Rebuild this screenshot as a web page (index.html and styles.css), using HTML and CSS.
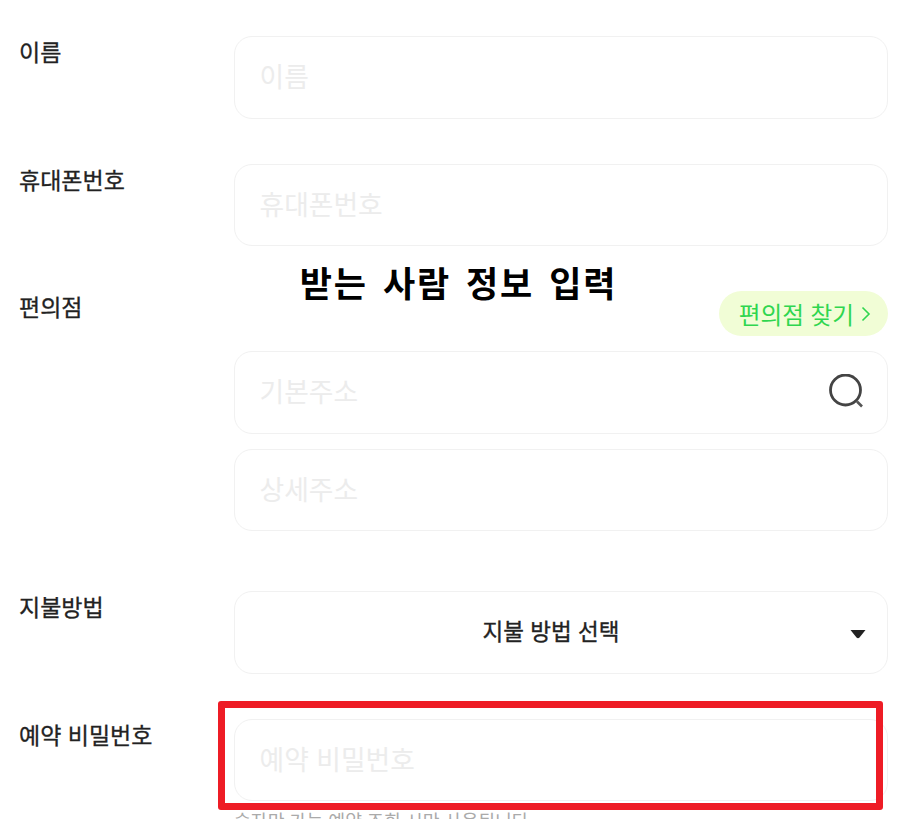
FILE: index.html
```html
<!DOCTYPE html>
<html lang="ko">
<head>
<meta charset="utf-8">
<title>받는 사람 정보 입력</title>
<link rel="stylesheet" href="styles.css">
</head>
<body>
<main class="form">
  <div class="row row-name">
    <label class="label">이름</label>
    <div class="fields"><input class="input" placeholder="이름"></div>
  </div>
  <div class="row row-phone">
    <label class="label">휴대폰번호</label>
    <div class="fields"><input class="input" placeholder="휴대폰번호"></div>
  </div>
  <div class="row row-store">
    <label class="label label-store">편의점</label>
    <div class="fields">
      <div class="find-wrap">
        <button class="find-btn">편의점 찾기<svg class="chev" width="10" height="16" viewBox="0 0 10 16"><path d="M1.5 1.5 L8 8 L1.5 14.5" fill="none" stroke="#2fd64f" stroke-width="1.6"/></svg></button>
      </div>
      <div class="search-box">
        <input class="input" placeholder="기본주소">
        <svg class="search-icon" width="36" height="36" viewBox="0 0 36 36"><circle cx="16.5" cy="16" r="15" fill="none" stroke="#444" stroke-width="2.8"/><path d="M28 27.5 L33 32.5" stroke="#555" stroke-width="2.6"/></svg>
      </div>
      <input class="input input-detail" placeholder="상세주소">
    </div>
  </div>
  <div class="row row-pay">
    <label class="label">지불방법</label>
    <div class="fields">
      <div class="select">지불 방법 선택<svg class="caret" width="16" height="9" viewBox="0 0 16 9"><path d="M0.5 0 H15.5 L9.5 7.5 Q8 9 6.5 7.5 Z" fill="#222"/></svg></div>
    </div>
  </div>
  <div class="row row-pass">
    <label class="label">예약 비밀번호</label>
    <div class="fields">
      <input class="input" placeholder="예약 비밀번호">
      <p class="hint">숫자만 가능 예약 조회 시만 사용됩니다</p>
    </div>
  </div>
</main>
<h1 class="overlay-title">받는 사람 정보 입력</h1>
<div class="annotation"></div>
</body>
</html>
```
FILE: styles.css
```css
* { box-sizing: border-box; }
html, body { margin: 0; height: 819px; overflow: hidden; background: #fff; }
body { position: relative; font-family: "Noto Sans CJK KR", "Noto Sans", sans-serif; color: #222; }
.form { padding: 36px 29px 0 19px; }
.row { display: flex; }
.row-phone { margin-top: 45px; }
.row-store { margin-top: 45px; }
.row-pay { margin-top: 60px; }
.row-pass { margin-top: 45px; }
.label { width: 215px; flex: none; font-size: 23px; font-weight: 400; -webkit-text-stroke: 0.3px #222; line-height: 31px; color: #222; }
.fields { flex: 1; min-width: 0; display: flex; flex-direction: column; }
.input { display: block; width: 100%; height: 82.5px; padding: 0 25px 3px 24.5px; border: 1px solid #f1f1f1; border-radius: 18px; background: #fff; font: 400 26.8px "Noto Sans CJK KR", sans-serif; outline: none; }
.input::placeholder { color: #ececec; opacity: 1; }
.find-wrap { display: flex; justify-content: flex-end; margin-bottom: 15px; }
.find-btn { display: flex; align-items: center; gap: 7px; height: 45px; padding: 0 17px 0 20px; border: 0; border-radius: 23px; background: #f1fdd6; color: #2fd64f; font: 400 23.6px "Noto Sans CJK KR", sans-serif; }
.search-box { position: relative; }
.search-icon { position: absolute; right: 23px; top: 23px; }
.input-detail { margin-top: 15px; }
.select { position: relative; display: flex; align-items: center; justify-content: center; height: 82.5px; padding: 0 20px 4px 0; border: 1px solid #f1f1f1; border-radius: 18px; font-size: 22.5px; font-weight: 400; -webkit-text-stroke: 0.35px #222; color: #222; }
.caret { position: absolute; right: 21px; top: 38px; }
.hint { margin: 5px 0 0; font-size: 18.3px; line-height: 28px; color: #aaa; }
.overlay-title { position: absolute; left: 0; right: 0; top: 258px; margin: 0; text-align: center; font-size: 35px; font-weight: 700; line-height: 48px; letter-spacing: 1.8px; word-spacing: 3.5px; color: #000; }
.annotation { position: absolute; left: 218px; top: 701px; width: 665px; height: 109px; border: 7px solid #ee1c25; border-radius: 3px; }
```
